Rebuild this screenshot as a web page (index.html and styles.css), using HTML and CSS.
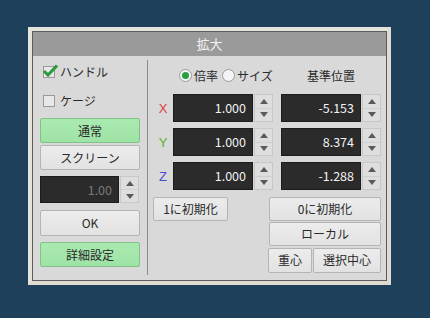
FILE: index.html
```html
<!DOCTYPE html>
<html>
	<head>
		<meta charset="UTF-8">
		<title>拡大</title>
		<link rel="stylesheet" href="styles.css">
	</head>
	<body>
		<div class="win">
			<div class="frame">
				<div class="title">拡大</div>
				<div class="content">
					<div class="left">
						<label class="check first"><span class="box on"><svg width="15" height="13" viewBox="0 0 15 13"><path d="M1 7 L5 11 L14 1.5" fill="none" stroke="#2a9a3a" stroke-width="3"/></svg></span>ハンドル</label>
						<label class="check second"><span class="box"></span>ケージ</label>
						<div class="btn green b1">通常</div>
						<div class="btn b2">スクリーン</div>
						<div class="spin small">
							<div class="field dim">1.00</div>
							<div class="arrows"><i class="up"></i><i class="down"></i></div>
						</div>
						<div class="btn b3">OK</div>
						<div class="btn green b4">詳細設定</div>
					</div>
					<div class="sep"></div>
					<div class="right">
						<div class="head">
							<div class="radios">
								<span class="radio on"></span>倍率
								<span class="radio"></span>サイズ
							</div>
							<div class="base">基準位置</div>
						</div>
						<div class="row">
							<span class="axis x">X</span>
							<div class="spin"><div class="field">1.000</div><div class="arrows"><i class="up"></i><i class="down"></i></div></div>
							<div class="spin"><div class="field">-5.153</div><div class="arrows"><i class="up"></i><i class="down"></i></div></div>
						</div>
						<div class="row">
							<span class="axis y">Y</span>
							<div class="spin"><div class="field">1.000</div><div class="arrows"><i class="up"></i><i class="down"></i></div></div>
							<div class="spin"><div class="field">8.374</div><div class="arrows"><i class="up"></i><i class="down"></i></div></div>
						</div>
						<div class="row">
							<span class="axis z">Z</span>
							<div class="spin"><div class="field">1.000</div><div class="arrows"><i class="up"></i><i class="down"></i></div></div>
							<div class="spin"><div class="field">-1.288</div><div class="arrows"><i class="up"></i><i class="down"></i></div></div>
						</div>
						<div class="btnrow r1">
							<div class="btn one">1に初期化</div>
							<div class="btn wide">0に初期化</div>
						</div>
						<div class="btnrow r2">
							<div class="btn wide">ローカル</div>
						</div>
						<div class="btnrow r3">
							<div class="btn g1">重心</div>
							<div class="btn g2">選択中心</div>
						</div>
					</div>
				</div>
			</div>
		</div>
	</body>
</html>
```
FILE: styles.css
```css
*{
	padding: 0;
	margin: 0;
	box-sizing: border-box;
}
body{
	background: #1e405a;
	padding: 27px 0 0 28px;
	font-family: "Noto Sans CJK JP", "Liberation Sans", sans-serif;
	font-size: 12px;
	color: #2a2a2a;
}
.win{
	width: 363px;
	height: 258px;
	border: 4px solid #e4e4dc;
	border-right-color: #dedbd3;
	border-bottom-color: #dedbd3;
}
.frame{
	height: 100%;
	border: 1px solid #5c5c5c;
	background: #d9d9d9;
}
.title{
	height: 24px;
	background: #9a9a9a;
	color: #f2f2f2;
	text-align: center;
	font-size: 13px;
	line-height: 24px;
}
.content{
	display: flex;
	padding-left: 7px;
	height: 224px;
}
.left{
	width: 100px;
	display: flex;
	flex-direction: column;
}
.check{
	display: flex;
	align-items: center;
	height: 16px;
	line-height: 16px;
	font-size: 12px;
}
.check.first{margin-top: 8px;}
.check.second{margin-top: 13px;}
.box{
	width: 12px;
	height: 12px;
	margin: 0 5px 0 3px;
	border: 1px solid #9a9a9a;
	background: #e8e8e8;
	position: relative;
}
.box svg{
	position: absolute;
	left: -1px;
	top: -3px;
}
.btn{
	height: 25px;
	line-height: 23px;
	text-align: center;
	border: 1px solid #b4b4b4;
	border-radius: 2px;
	background: linear-gradient(#ececec, #e2e2e2);
	color: #2a2a2a;
}
.btn.green{
	background: linear-gradient(#a9eab0, #9fe2a6);
	border-color: #7fc486;
}
.b1{margin-top: 9px;}
.b2{margin-top: 2px;}
.spin.small{margin-top: 6px; height: 27px;}
.b3{margin-top: 7px; height: 26px; line-height: 24px;}
.b4{margin-top: 6px;}
.spin{
	display: flex;
	height: 28px;
}
.field{
	width: 80px;
	background: #2b2b2b;
	border: 1px solid #1c1c1c;
	color: #f2f2f2;
	text-align: right;
	padding-right: 6px;
	font-size: 12.5px;
	line-height: 26px;
}
.field.dim{
	color: #7a7a7a;
	width: 79px;
}
.arrows{
	width: 19px;
	margin-left: 1px;
	display: flex;
	flex-direction: column;
	border: 1px solid #c8c8c8;
	background: #dedede;
}
.arrows i{
	flex: 1;
	display: flex;
	align-items: center;
	justify-content: center;
}
.arrows i.up{border-bottom: 1px solid #cfcfcf;}
.arrows i.up::after{
	content: "";
	border-left: 4px solid transparent;
	border-right: 4px solid transparent;
	border-bottom: 5px solid #5a5a5a;
}
.arrows i.down::after{
	content: "";
	border-left: 4px solid transparent;
	border-right: 4px solid transparent;
	border-top: 5px solid #5a5a5a;
}
.sep{
	width: 1px;
	background: #8a8a8a;
	margin: 4px 5px 5px 7px;
}
.right{
	width: 228px;
	display: flex;
	flex-direction: column;
}
.head{
	display: flex;
	align-items: center;
	height: 20px;
	margin-top: 9px;
}
.radios{
	display: flex;
	align-items: center;
	width: 128px;
	padding-left: 26px;
}
.radio{
	width: 13px;
	height: 13px;
	border-radius: 50%;
	border: 1px solid #9a9a9a;
	background: #f4f4f4;
	margin-right: 2px;
	display: flex;
	align-items: center;
	justify-content: center;
}
.radios .radio:nth-of-type(2){margin-left: 4px;}
.radio.on::after{
	content: "";
	width: 7px;
	height: 7px;
	border-radius: 50%;
	background: #24a040;
}
.base{
	flex: 1;
	text-align: center;
}
.row{
	display: flex;
	align-items: center;
	margin-top: 9px;
}
.row + .row{margin-top: 6px;}
.axis{
	width: 22px;
	text-align: center;
	font-family: "Liberation Sans", sans-serif;
	font-size: 13px;
}
.axis.x{color: #e03c3c;}
.axis.y{color: #5cb030;}
.axis.z{color: #4a4ad0;}
.spin + .spin{margin-left: 8px;}
.btnrow{
	display: flex;
	justify-content: space-between;
}
.btnrow .btn{height: 24px; line-height: 22px;}
.r1{margin-top: 7px;}
.r2{margin-top: 1px; justify-content: flex-end;}
.r3{margin-top: 2px; justify-content: flex-end;}
.btn.one{width: 75px;}
.btn.wide{width: 112px;}
.btn.g1{width: 44px; height: 25px;}
.btn.g2{width: 68px; height: 25px; margin-left: 1px;}
```
